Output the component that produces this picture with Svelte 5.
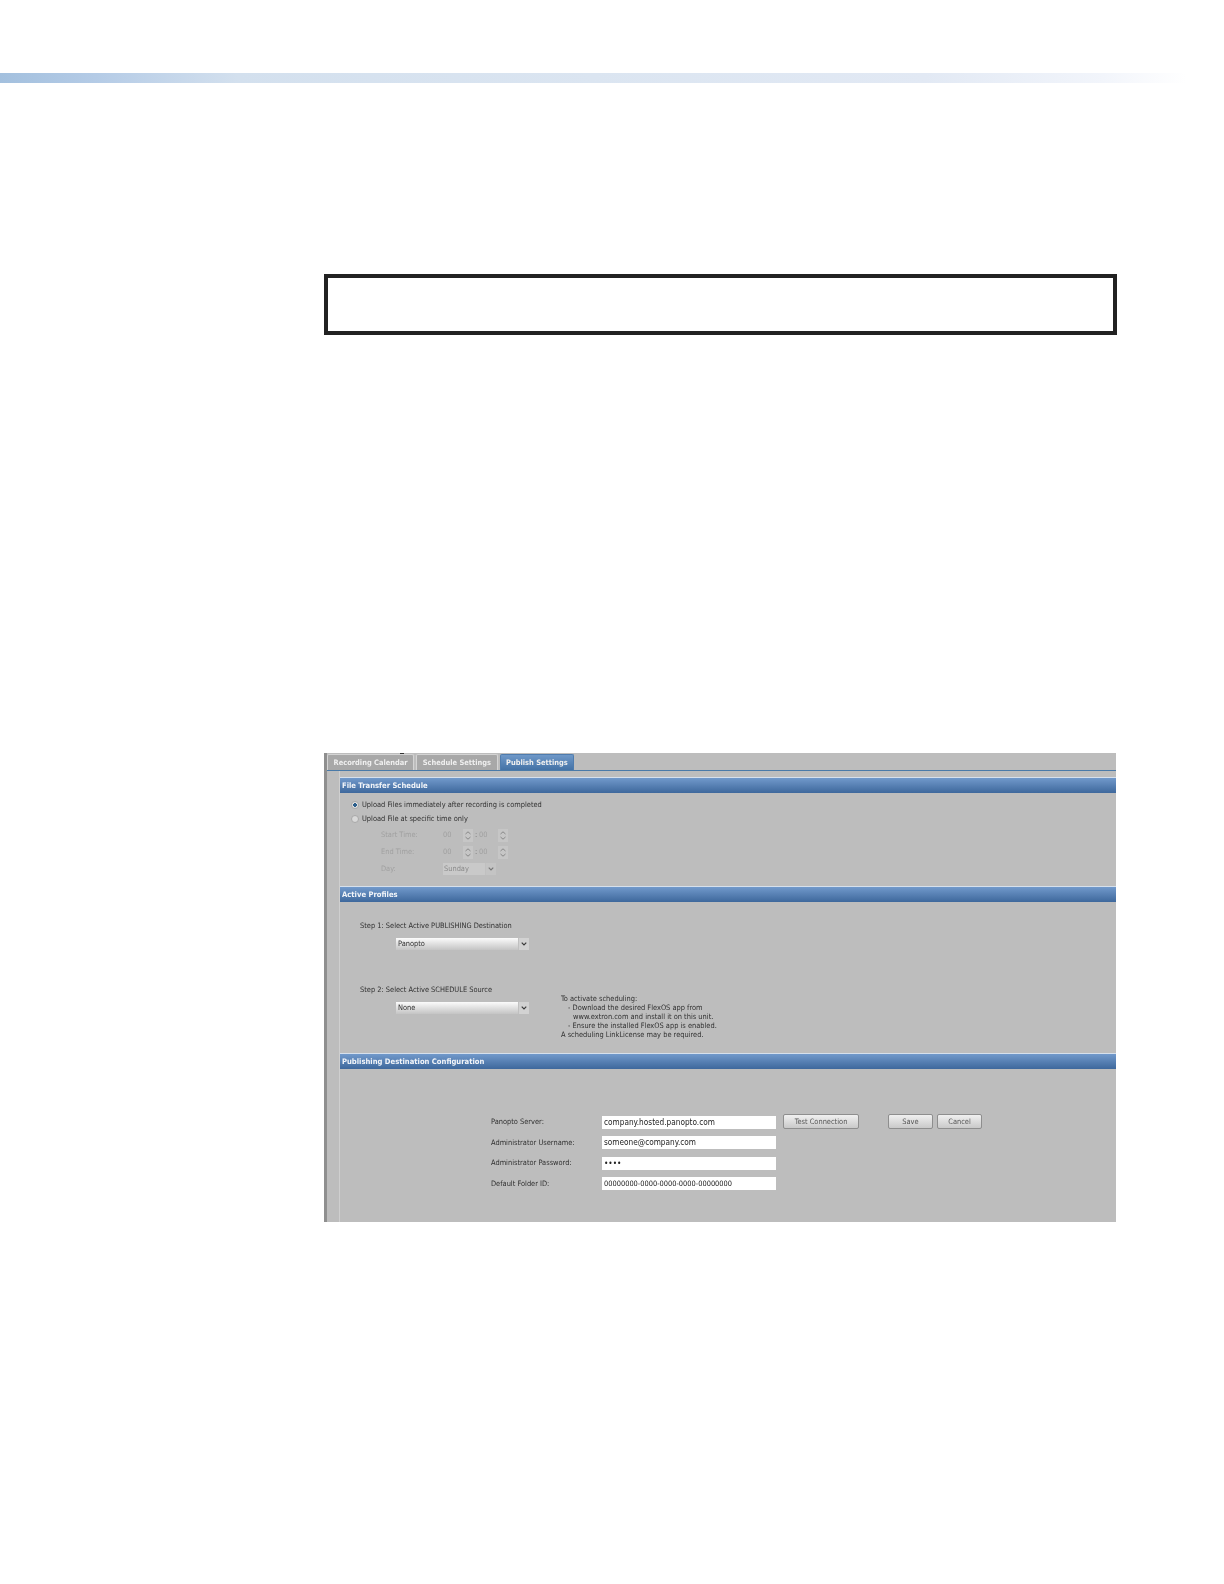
<script lang="ts">
	const tabs = [
		{ label: 'Recording Calendar', active: false },
		{ label: 'Schedule Settings', active: false },
		{ label: 'Publish Settings', active: true }
	];

	const notes = [
		{ text: 'To activate scheduling:', indent: 0 },
		{ text: '- Download the desired FlexOS app from', indent: 1 },
		{ text: 'www.extron.com and install it on this unit.', indent: 2 },
		{ text: '- Ensure the installed FlexOS app is enabled.', indent: 1 },
		{ text: 'A scheduling LinkLicense may be required.', indent: 0 }
	];

	const times = [
		{ label: 'Start Time:', h: '00', m: '00' },
		{ label: 'End Time:', h: '00', m: '00' }
	];

	const fields = [
		{ label: 'Panopto Server:', value: 'company.hosted.panopto.com', kind: '' },
		{ label: 'Administrator Username:', value: 'someone@company.com', kind: '' },
		{ label: 'Administrator Password:', value: '••••', kind: 'dots' },
		{ label: 'Default Folder ID:', value: '00000000-0000-0000-0000-00000000', kind: 'small' }
	];
</script>

{#snippet spinner()}
	<svg class="spin" viewBox="0 0 10 13" aria-hidden="true">
		<path d="M2.5 5 5 2.8 7.5 5M2.5 8 5 10.2 7.5 8" fill="none" stroke="#888" stroke-width="1" />
	</svg>
{/snippet}

{#snippet arrow()}
	<svg class="arrow" viewBox="0 0 11 13" aria-hidden="true">
		<path d="M3 5 5.5 7.5 8 5" fill="none" stroke="#3a3a3a" stroke-width="1.3" />
	</svg>
{/snippet}

<div class="page">
	<div class="band"></div>
	<div class="note"></div>

	<div class="shot">
		<span class="tick"></span>
		<div class="tabs">
			{#each tabs as tab}
				<div class="tab" class:active={tab.active}>{tab.label}</div>
			{/each}
		</div>

		<div class="body">
			<div class="head">File Transfer Schedule</div>
			<div class="transfer">
				<div class="radio-row">
					<span class="radio on"></span>
					<span>Upload Files immediately after recording is completed</span>
				</div>
				<div class="radio-row">
					<span class="radio"></span>
					<span>Upload File at specific time only</span>
				</div>
				<div class="times">
					{#each times as t}
						<div class="time-row">
							<span class="dim-label">{t.label}</span>
							<span class="num">{t.h}</span>
							{@render spinner()}
							<span class="colon">:</span>
							<span class="num short">{t.m}</span>
							{@render spinner()}
						</div>
					{/each}
					<div class="time-row">
						<span class="dim-label">Day:</span>
						<span class="day">Sunday{@render arrow()}</span>
					</div>
				</div>
			</div>

			<div class="head">Active Profiles</div>
			<div class="profiles">
				<div class="step one">
					<div class="step-label">Step 1: Select Active PUBLISHING Destination</div>
					<div class="select">Panopto{@render arrow()}</div>
				</div>
				<div class="step-two">
					<div class="step">
						<div class="step-label">Step 2: Select Active SCHEDULE Source</div>
						<div class="select">None{@render arrow()}</div>
					</div>
					<div class="notes">
						{#each notes as n}
							<div class="indent-{n.indent}">{n.text}</div>
						{/each}
					</div>
				</div>
			</div>

			<div class="head">Publishing Destination Configuration</div>
			<div class="config">
				<div class="fields">
					{#each fields as f}
						<span class="field-label">{f.label}</span>
						<span class="input {f.kind}">{f.value}</span>
					{/each}
				</div>
				<div class="actions">
					<span class="btn test">Test Connection</span>
					<span class="btn save">Save</span>
					<span class="btn cancel">Cancel</span>
				</div>
			</div>
		</div>
	</div>
</div>

<style>
	:global(body) {
		margin: 0;
		background: #fff;
	}

	.page {
		height: 1584px;
		padding-top: 73px;
		box-sizing: border-box;
		overflow: hidden;
	}

	.band {
		height: 10px;
		width: 1186px;
		background: linear-gradient(90deg, #a3c0de 0%, #b4cbe6 8%, #d3e0ee 20%, #dbe5f1 50%, #e2e9f4 78%, #f2f5fb 93%, #fff 100%);
	}

	.note {
		width: 793px;
		height: 61px;
		box-sizing: border-box;
		margin: 191px 0 0 324px;
		border: 4px solid #222;
	}

	.shot {
		position: relative;
		display: flex;
		flex-direction: column;
		width: 792px;
		height: 469px;
		box-sizing: border-box;
		margin: 418px 0 0 324px;
		padding-top: 1px;
		background: #bdbdbd;
		border-left: 3px solid #8f8f8f;
		color: #303030;
		font: 7.4px/10px "DejaVu Sans", Verdana, sans-serif;
		font-stretch: condensed;
		filter: blur(0.35px);
	}

	.tick {
		position: absolute;
		top: 0;
		left: 73px;
		width: 4px;
		height: 1px;
		background: #333;
	}

	.tabs {
		display: flex;
		gap: 2px;
		height: 16px;
		flex-shrink: 0;
		border-bottom: 1px solid #4a7aa8;
	}

	.tab {
		padding: 0 5.5px;
		height: 16px;
		line-height: 16px;
		box-sizing: border-box;
		background: #a8a8a8;
		border: 1px solid #d4d4d4;
		border-bottom: 0;
		border-radius: 2px 2px 0 0;
		color: #efefef;
		font-weight: bold;
		white-space: nowrap;
		font-size: 7.45px;
	}

	.tab.active {
		background: linear-gradient(#6e98c8, #4472a6);
		border-color: #4f7cae;
	}

	.body {
		flex: 1;
		margin-left: 12px;
		padding-top: 6px;
		border-left: 1px solid #cfcfcf;
	}

	.head {
		height: 16px;
		line-height: 15px;
		padding-left: 2px;
		background: linear-gradient(#7199cb, #3e689c);
		border-top: 1px solid #d6e0ec;
		box-sizing: border-box;
		color: #f2f5f9;
		font-weight: bold;
		font-size: 7.6px;
	}

	.transfer {
		height: 93px;
		box-sizing: border-box;
		padding: 4.5px 0 0 11px;
	}

	.radio-row {
		display: flex;
		align-items: center;
		gap: 3px;
		height: 14px;
	}

	.radio {
		flex-shrink: 0;
		width: 6px;
		height: 6px;
		border-radius: 50%;
		background: #d9d9d9;
		border: 1px solid #a8a8a8;
	}

	.radio.on {
		background: radial-gradient(circle, #2d5f8c 45%, #e3e3e3 50%);
	}

	.times {
		padding: 1px 0 0 30px;
		color: #a0a0a0;
	}

	.time-row {
		display: flex;
		align-items: center;
		height: 17px;
	}

	.dim-label {
		width: 62px;
	}

	.num {
		width: 20px;
	}

	.num.short {
		width: 19px;
	}

	.spin {
		display: block;
		width: 10px;
		height: 13px;
		background: #c6c6c6;
	}

	.colon {
		width: 6px;
		padding-left: 2px;
		box-sizing: border-box;
		color: #777;
	}

	.day {
		display: flex;
		justify-content: space-between;
		width: 53px;
		height: 12px;
		line-height: 12px;
		box-sizing: border-box;
		padding-left: 1px;
		background: #c9c9c9;
		color: #8a8a8a;
	}

	.arrow {
		display: block;
		width: 11px;
		height: 12px;
		background: #d2d2d2;
		border-left: 1px solid #c0c0c0;
		box-sizing: border-box;
	}

	.day .arrow {
		background: #c4c4c4;
	}

	.day .arrow path {
		stroke: #777;
	}

	.profiles {
		height: 151px;
		box-sizing: border-box;
		padding: 19px 0 0 20px;
	}

	.step.one {
		height: 64px;
	}

	.step-two {
		display: flex;
		gap: 32px;
	}

	.step-label {
		height: 12px;
		margin-bottom: 5px;
		white-space: nowrap;
	}

	.select {
		display: flex;
		justify-content: space-between;
		width: 133px;
		height: 12px;
		line-height: 12px;
		margin-left: 36px;
		padding-left: 2px;
		box-sizing: border-box;
		background: linear-gradient(#fbfbfb, #c4c4c4);
	}

	.notes {
		padding-top: 8.5px;
		line-height: 9.2px;
		white-space: nowrap;
	}

	.indent-1 {
		padding-left: 7px;
	}

	.indent-2 {
		padding-left: 12px;
	}

	.config {
		display: flex;
		align-items: flex-start;
		padding: 46px 0 0 151px;
	}

	.fields {
		display: grid;
		grid-template-columns: 111px 174px;
		grid-auto-rows: 14px;
		row-gap: 6.5px;
		align-items: center;
		white-space: nowrap;
	}

	.input {
		height: 13px;
		line-height: 13px;
		padding-left: 2px;
		box-sizing: border-box;
		background: #fff;
		color: #222;
		font-size: 8.2px;
	}

	.input.small {
		font-size: 7.4px;
	}

	.actions {
		display: flex;
		align-items: center;
		margin: -1px 0 0 7px;
	}

	.btn {
		height: 15px;
		line-height: 13px;
		box-sizing: border-box;
		text-align: center;
		background: linear-gradient(#f0f0f0, #c9c9c9);
		border: 1px solid #8e8e8e;
		border-radius: 2px;
		color: #555;
	}

	.test {
		width: 76px;
	}

	.save {
		width: 45px;
		margin-left: 29px;
	}

	.cancel {
		width: 45px;
		margin-left: 4px;
	}
</style>
